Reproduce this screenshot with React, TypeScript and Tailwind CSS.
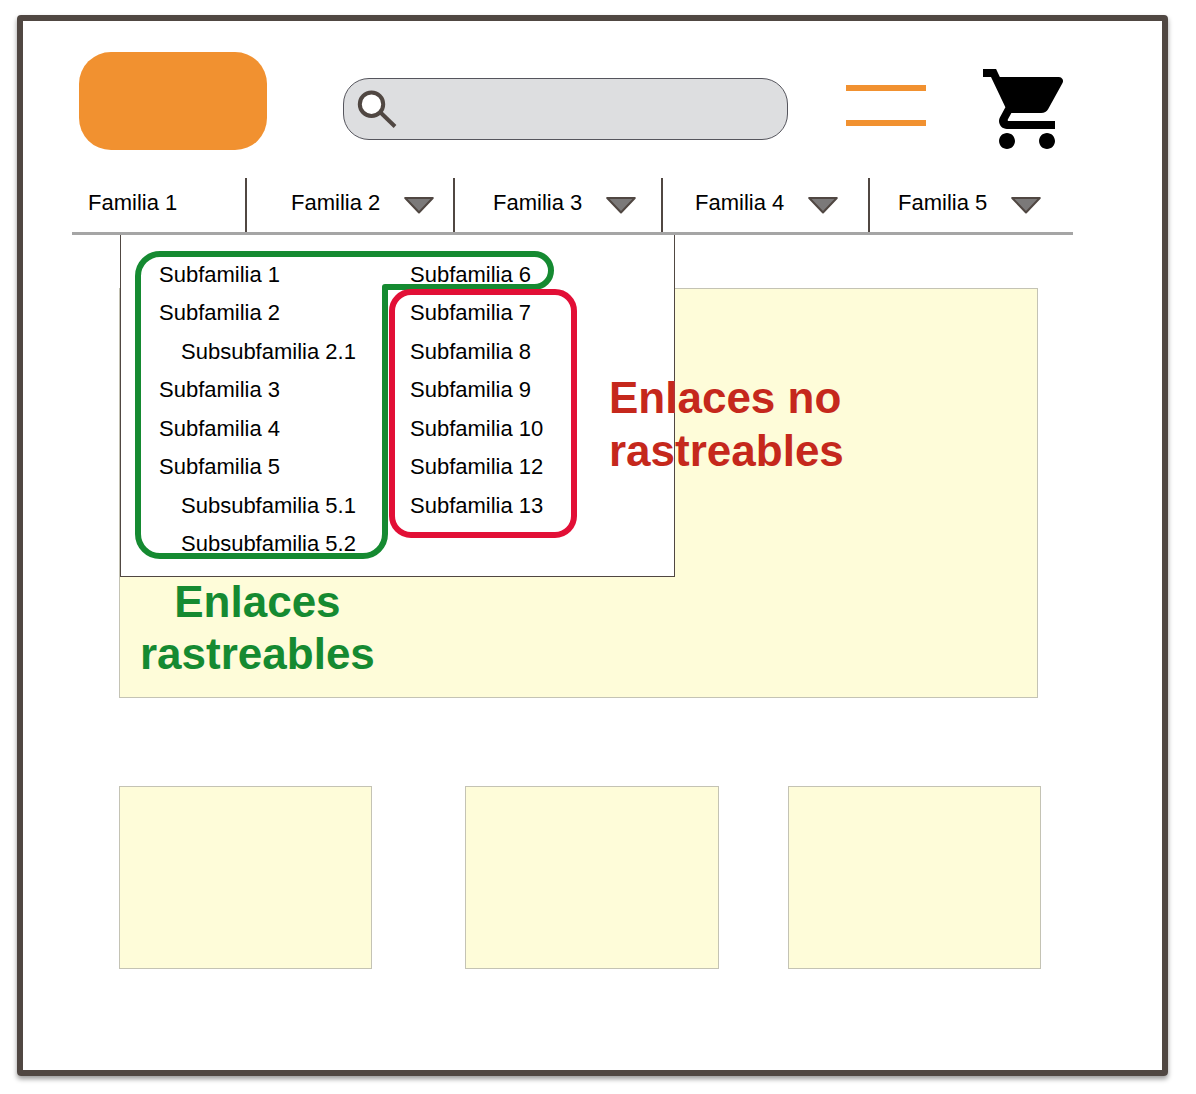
import React from 'react';
import { MdShoppingCart } from 'react-icons/md';

interface Family {
    name: string;
    cell: string;
    hasMenu: boolean;
}

interface Subfamily {
    name: string;
    nested?: boolean;
}

const families: Family[] = [
    { name: 'Familia 1', cell: 'pl-4 border-r-2', hasMenu: false },
    { name: 'Familia 2', cell: 'pl-11 border-r-2', hasMenu: true },
    { name: 'Familia 3', cell: 'pl-[38px] border-r-2', hasMenu: true },
    { name: 'Familia 4', cell: 'pl-8 border-r-2', hasMenu: true },
    { name: 'Familia 5', cell: 'pl-7', hasMenu: true },
];

const leftColumn: Subfamily[] = [
    { name: 'Subfamilia 1' },
    { name: 'Subfamilia 2' },
    { name: 'Subsubfamilia 2.1', nested: true },
    { name: 'Subfamilia 3' },
    { name: 'Subfamilia 4' },
    { name: 'Subfamilia 5' },
    { name: 'Subsubfamilia 5.1', nested: true },
    { name: 'Subsubfamilia 5.2', nested: true },
];

const rightColumn: Subfamily[] = [
    { name: 'Subfamilia 6' },
    { name: 'Subfamilia 7' },
    { name: 'Subfamilia 8' },
    { name: 'Subfamilia 9' },
    { name: 'Subfamilia 10' },
    { name: 'Subfamilia 12' },
    { name: 'Subfamilia 13' },
];

const SearchIcon = () => (
    <svg className="w-10 h-[38px] shrink-0" viewBox="0 0 40 38" aria-hidden="true">
        <path d="M23 22 38 36.500" stroke="#504742" strokeWidth="4" />
        <circle cx="14.5" cy="14.2" r="11.7" fill="#fff" stroke="#504742" strokeWidth="4" />
    </svg>
);

const Arrow = () => (
    <svg className="w-[30px] h-6 shrink-0" viewBox="0 0 30 24" aria-hidden="true">
        <path d="M1.200 8h27.600L15 22.500z" fill="#7b7979" stroke="#504742" strokeWidth="2" strokeLinejoin="round" />
    </svg>
);

const LinkColumn = ({ items }: { items: Subfamily[] }) => (
    <ul className="grid grid-rows-8 h-[308px] w-[251px]">
        {items.map((item) => (
            <li key={item.name} className={item.nested ? 'flex items-center pl-[22px]' : 'flex items-center'}>
                <a href="#" className="whitespace-nowrap">{item.name}</a>
            </li>
        ))}
    </ul>
);

const Dropdown = () => (
    <div className="absolute z-10 top-full left-12 mt-[3px] w-[555px] h-[342px] border border-t-0 border-[#504742] bg-white pt-5 pl-[38px]">
        <div className="flex">
            <LinkColumn items={leftColumn} />
            <LinkColumn items={rightColumn} />
        </div>

        {/* Crawlable links */}
        <svg className="absolute left-3.5 top-4 w-[420px] h-[308px]" viewBox="0 0 420 308" aria-hidden="true">
            <path
                d="M250 36H399.500a16.500 16.500 0 0 0 0-33H25A22 22 0 0 0 3 25V283A22 22 0 0 0 25 305H228A22 22 0 0 0 250 283Z"
                fill="none"
                stroke="#158a31"
                strokeWidth="6"
                strokeLinejoin="round"
            />
        </svg>

        {/* Non-crawlable links */}
        <div className="absolute left-[268px] top-[54px] w-[188px] h-[249px] rounded-[22px] border-6 border-[#e20f36]" />
    </div>
);

const App: React.FC = () => {
    return (
        <div className="bg-white pt-[15px] pb-[18px] pl-[17px] pr-7 font-['Liberation_Sans',Arial,sans-serif] text-[22px] text-black">
            <div className="border-6 border-[#504742] rounded-[4px] shadow-[0_3px_5px_rgba(0,0,0,0.4)] pt-[31px] pb-[101px]">

                {/* Header */}
                <header className="flex items-center pl-14 pr-[87px]">
                    <a href="#" aria-label="Inicio" className="pb-4 shrink-0">
                        <span className="block w-[188px] h-[98px] rounded-[32px] bg-[#f19130]" />
                    </a>
                    <label className="ml-[76px] flex-1 min-w-0 h-[62px] flex items-center gap-2 pl-[13px] pr-6 rounded-[26px] border border-[#55555d] bg-[#dddee0]">
                        <SearchIcon />
                        <input type="search" aria-label="Buscar" className="flex-1 min-w-0 bg-transparent outline-none" />
                    </label>
                    <button type="button" aria-label="Menú" className="ml-[58px] w-20 h-12 shrink-0 flex flex-col gap-[29px]">
                        <span className="block w-full h-1.5 bg-[#f19130]" />
                        <span className="block w-full h-1.5 bg-[#f19130]" />
                    </button>
                    <button type="button" aria-label="Carrito" className="ml-[53px] shrink-0">
                        <MdShoppingCart className="w-24 h-24" />
                    </button>
                </header>

                {/* Families */}
                <nav className="relative mt-3 ml-[49px] mr-[89px] border-b-3 border-[#a5a5a5]">
                    <ul className="grid grid-cols-[175fr_208fr_208fr_207fr_203fr] h-[54px]">
                        {families.map((family) => (
                            <li key={family.name} className={`flex items-center pb-1.5 border-[#504742] ${family.cell}`}>
                                {family.hasMenu ? (
                                    <button type="button" className="flex items-center gap-6 whitespace-nowrap">
                                        {family.name}
                                        <Arrow />
                                    </button>
                                ) : (
                                    <a href="#" className="whitespace-nowrap">{family.name}</a>
                                )}
                            </li>
                        ))}
                    </ul>
                    <Dropdown />
                </nav>

                {/* Content */}
                <main>
                    <section className="relative mt-[53px] ml-24 mr-[124px] h-[410px] border border-[#c4c3b4] bg-[#fefcd9] text-[44px] leading-[52px] font-bold">
                        <p className="absolute z-20 left-[489px] top-[82px] leading-[53px] text-[#c5281c]">
                            Enlaces no<br />rastreables
                        </p>
                        <p className="absolute z-20 left-5 top-[287px] text-center text-[#158a31]">
                            Enlaces<br />rastreables
                        </p>
                    </section>
                    <section className="flex mt-[88px] ml-24 mr-[121px]">
                        <div className="flex-1 h-[183px] border border-[#c4c3b4] bg-[#fefcd9]" />
                        <div className="flex-1 h-[183px] ml-[93px] border border-[#c4c3b4] bg-[#fefcd9]" />
                        <div className="flex-1 h-[183px] ml-[69px] border border-[#c4c3b4] bg-[#fefcd9]" />
                    </section>
                </main>
            </div>
        </div>
    );
};

export default App;
